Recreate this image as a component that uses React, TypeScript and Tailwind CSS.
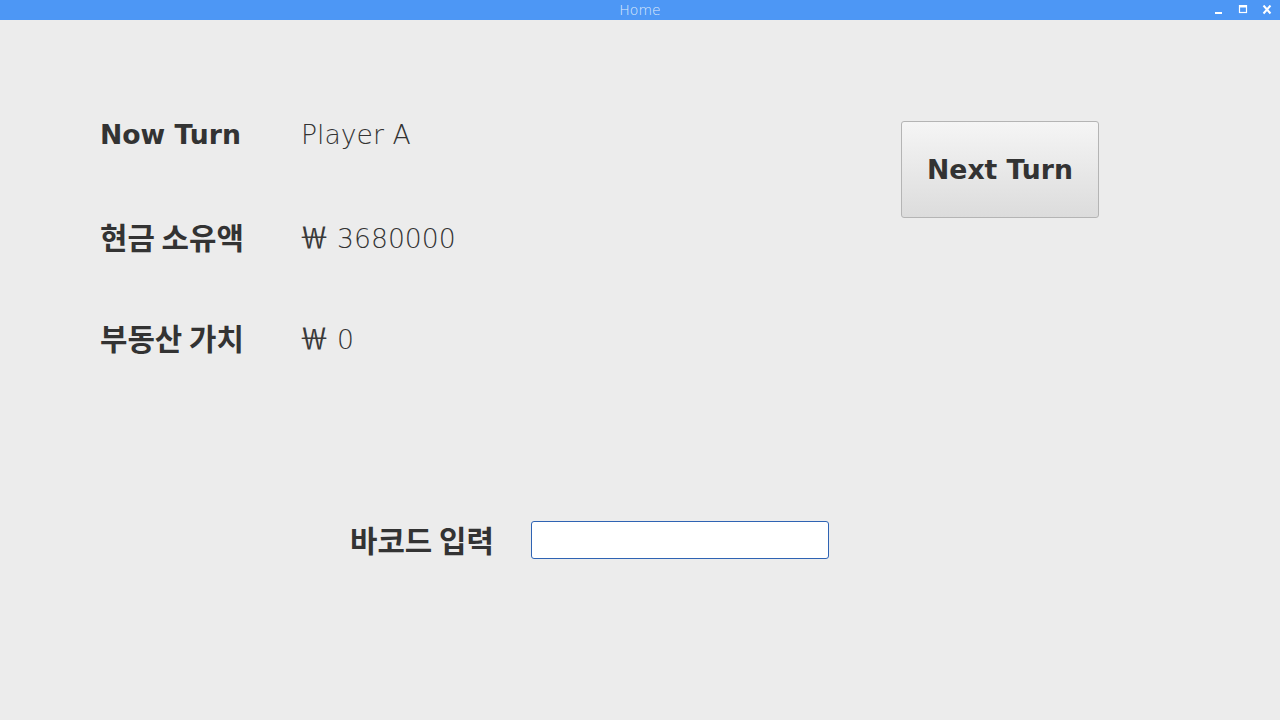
import React from 'react';

const rows = [
  { label: 'Now Turn', value: 'Player A', korean: false, won: false },
  { label: '현금 소유액', value: '3680000', korean: true, won: true },
  { label: '부동산 가치', value: '0', korean: true, won: true },
];

function TitleBar() {
  return (
    <div className="relative flex h-[20px] items-center justify-center bg-[#4d97f5]">
      <span className="text-[14px] font-extralight leading-none text-[#dfeafb] [font-family:'DejaVu_Sans','Liberation_Sans',sans-serif]">
        Home
      </span>
      <div className="absolute right-[8px] top-0 flex h-[20px] items-center gap-[14px]">
        <svg width="10" height="10" viewBox="0 0 10 10">
          <rect x="1" y="7" width="7" height="2" fill="#ffffff" />
        </svg>
        <svg width="10" height="10" viewBox="0 0 10 10">
          <rect x="1.5" y="0.5" width="7" height="7" fill="none" stroke="#ffffff" strokeWidth="1.2" />
          <rect x="1.5" y="0.5" width="7" height="2" fill="#ffffff" />
        </svg>
        <svg width="10" height="10" viewBox="0 0 10 10">
          <path d="M1.5 0.5 L8.5 8.5 M8.5 0.5 L1.5 8.5" stroke="#ffffff" strokeWidth="2" />
        </svg>
      </div>
    </div>
  );
}

export default function App() {
  return (
    <div className="flex h-[720px] w-[1280px] flex-col bg-[#ececec] text-[#333333] [font-family:'DejaVu_Sans','Noto_Sans_CJK_KR',sans-serif]">
      <TitleBar />

      <div className="flex items-start">
        {/* Player info */}
        <div className="w-[901px] pl-[100px] pt-[65px]">
          {rows.map((row) => (
            <div key={row.label} className="flex h-[101px] items-center">
              <span
                className={
                  row.korean
                    ? 'w-[201px] text-[29.8px] font-bold leading-none [font-family:"Noto_Sans_CJK_KR",sans-serif]'
                    : 'w-[201px] text-[26.67px] font-bold leading-none'
                }
              >
                {row.label}
              </span>
              <span className="flex items-baseline text-[26.67px] font-extralight leading-none">
                {row.won && (
                  <span className="-ml-[2px] mr-[8px] text-[30px] font-normal leading-none text-[#3a3a3a] [font-family:'Noto_Sans_CJK_KR',sans-serif]">
                    ￦
                  </span>
                )}
                {row.value}
              </span>
            </div>
          ))}
        </div>

        <button className="mt-[101px] h-[97px] w-[198px] rounded-[3px] border border-[#b4b4b4] bg-gradient-to-b from-[#f5f5f5] to-[#dcdcdc] text-[26.67px] font-bold text-[#333333]">
          Next Turn
        </button>
      </div>

      {/* Barcode */}
      <div className="mt-[133px] flex items-center pl-[350px]">
        <span className="w-[181px] text-[29.8px] font-bold leading-none [font-family:'Noto_Sans_CJK_KR',sans-serif]">
          바코드 입력
        </span>
        <input
          type="text"
          className="h-[38px] w-[298px] rounded-[3px] border border-[#2f63b3] bg-white px-2 outline-none"
        />
      </div>
    </div>
  );
}
